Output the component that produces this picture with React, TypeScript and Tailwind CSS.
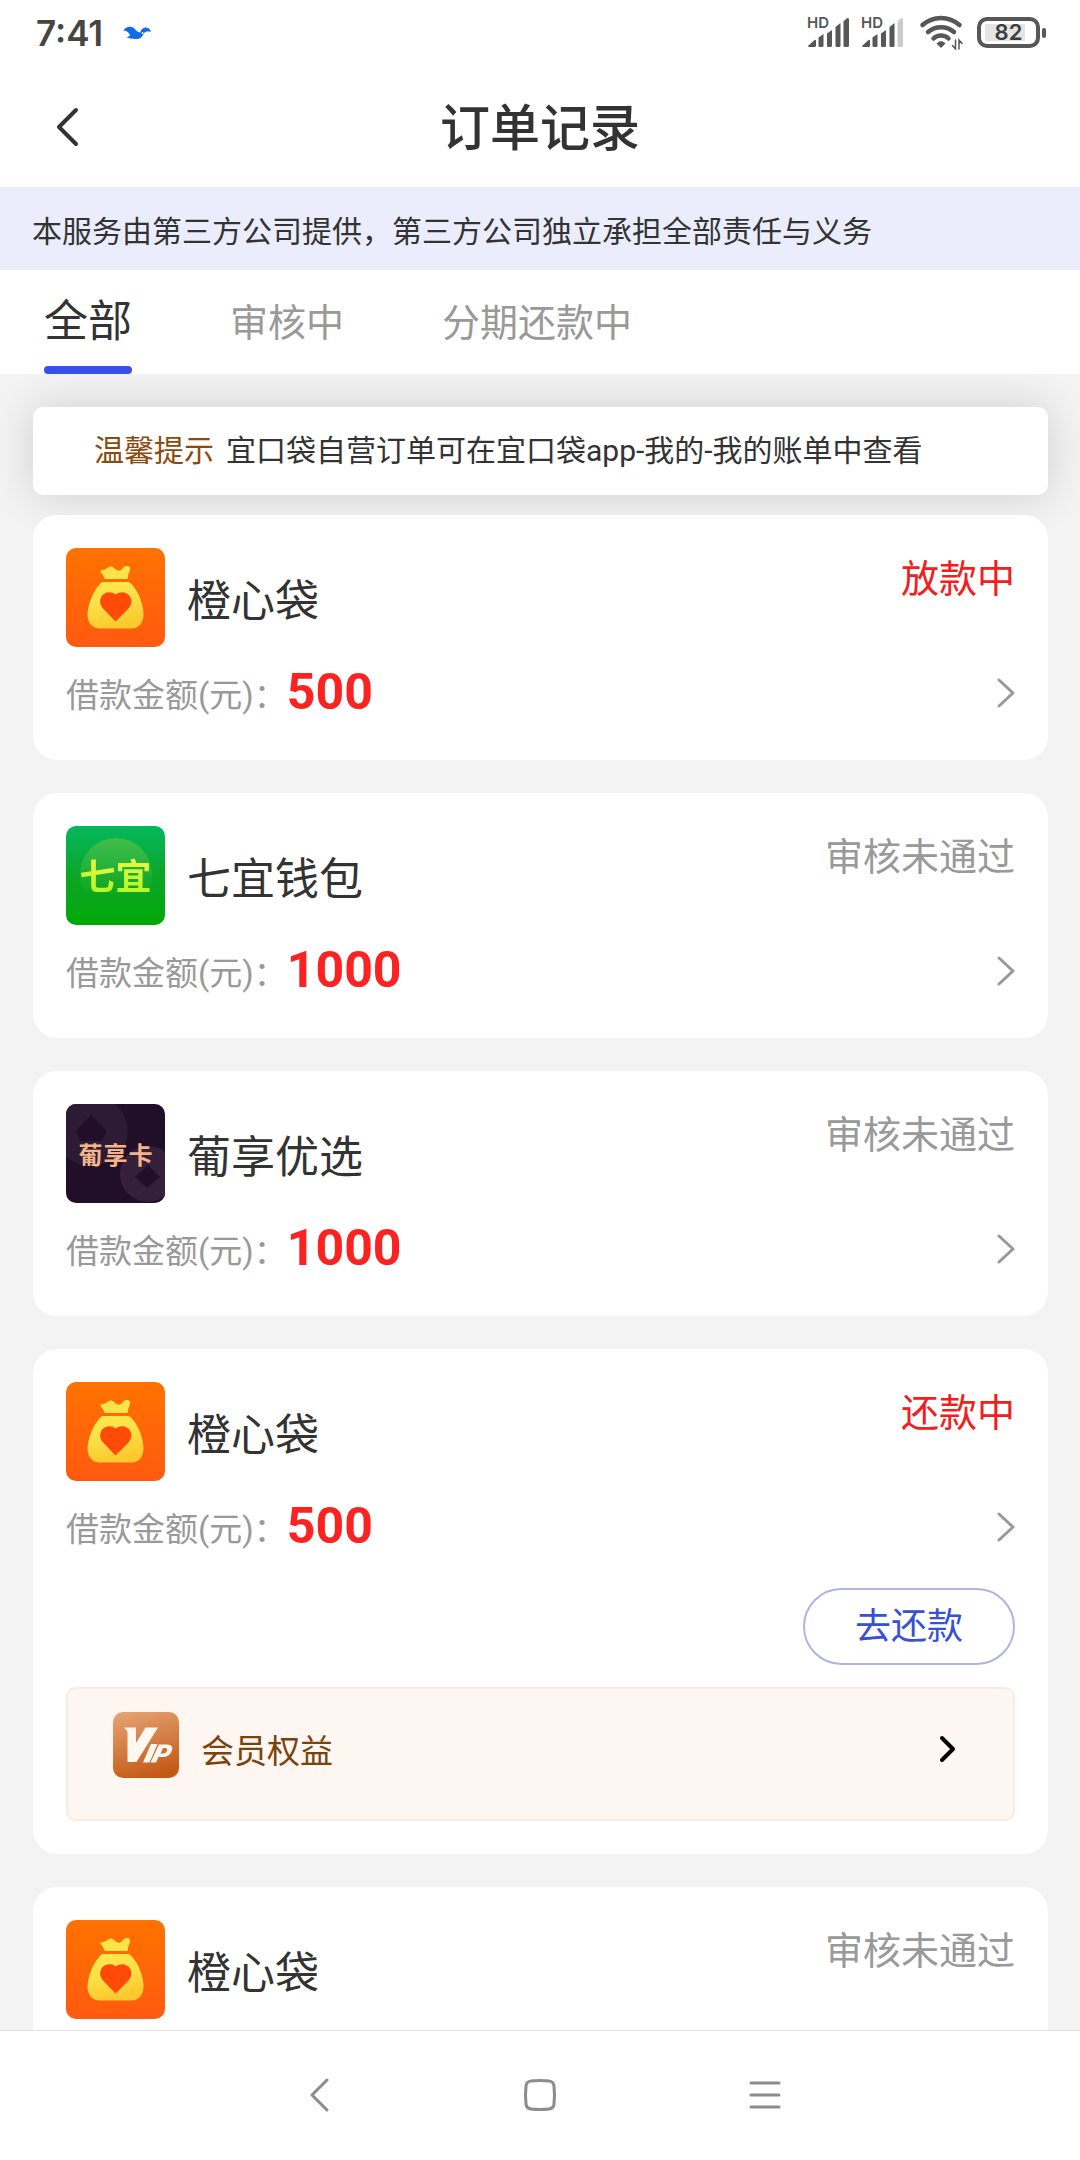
import React from "react";

type LogoKind = "bag" | "qiyi" | "puxiang";

type Order = {
  id: number;
  name: string;
  logo: LogoKind;
  status: string;
  active: boolean;
  amount: number;
  repay?: boolean;
};

const orders: Order[] = [
  { id: 1, name: "橙心袋", logo: "bag", status: "放款中", active: true, amount: 500 },
  { id: 2, name: "七宜钱包", logo: "qiyi", status: "审核未通过", active: false, amount: 1000 },
  { id: 3, name: "葡享优选", logo: "puxiang", status: "审核未通过", active: false, amount: 1000 },
  { id: 4, name: "橙心袋", logo: "bag", status: "还款中", active: true, amount: 500, repay: true },
  { id: 5, name: "橙心袋", logo: "bag", status: "审核未通过", active: false, amount: 500 },
];

const tabs = ["全部", "审核中", "分期还款中"];

function Signal({ weak }: { weak?: boolean }) {
  return (
    <div className="relative h-8 w-11">
      <svg viewBox="0 0 44 32" className="h-8 w-11" fill="#575757">
        <path d="M1.5 29.500 7 24.500Q9 23 9 25V29.5Q9 31 7.500 31H2Q.5 31 1.500 29.500Z" />
        <path d="M11.500 21.500 16.500 18V29.500Q16.500 31 15 31H13Q11.500 31 11.500 29.500V22.500Z" />
        <path d="M20 17.500 25 14V29.500Q25 31 23.500 31H21.500Q20 31 20 29.500V18.500Z" />
        <path d="M28.500 11 33.500 7V29.500Q33.500 31 32 31H30Q28.500 31 28.500 29.500V12Z" />
        <path
          d="M36.500 5.500 39.500 2.500Q42 1 42 4V29.500Q42 31 40.500 31H38Q36.500 31 36.500 29.500Z"
          fill={weak ? "#cbcbcb" : "#575757"}
        />
      </svg>
      <span className="absolute left-0 top-0 font-['Inter'] text-[15px] font-semibold leading-[14px] text-[#575757]">
        HD
      </span>
    </div>
  );
}

function StatusBar() {
  return (
    <div className="flex h-[66px] shrink-0 items-center justify-between pl-9 pr-[33px]">
      <div className="flex items-center gap-5">
        <span className="font-['Inter'] text-[35px] font-semibold leading-[44px] text-[#454545]">7:41</span>
        <svg viewBox="0 0 28 14" className="h-[14px] w-7" fill="#0f6be8">
          <path d="M0 4.500C3 .5 7-.2 10 1.500c3 2 4 5 7.500 5C17.500 4 20 1.500 23 1.500c3 .2 4.500 2.500 5 4.500-2-.6-4-.6-5.500 0-1 .5-1.500 1-2 2C19 12 16 13.500 12.500 13 9 12.800 6 12.500 3.500 11c1.500 0 3-.7 3.500-1.500C6.500 7 3.500 4 0 4.500Z" />
          <circle cx="19.500" cy="7" r=".9" fill="#fff" />
        </svg>
      </div>
      <div className="flex items-center gap-[14px] pb-0.5">
        <div className="flex gap-[10px]">
          <Signal />
          <Signal weak />
        </div>
        <svg viewBox="0 0 44 36" className="h-9 w-11" fill="none" stroke="#575757" strokeWidth="4.500" strokeLinecap="round">
          <path d="M3.500 11C14 1.500 30 1.500 40.500 11" />
          <path d="M9 18c7.500-6.500 18.500-6.500 26 0" />
          <path d="M14.500 24.500c4-4 11-4 15 0" />
          <path d="M19 29.500c2-1.500 4-1.500 6 0l-3 3Z" fill="#575757" strokeWidth="2" />
          <path d="M36.500 26v9l-3-3.500M40 35v-9l3 3.500" strokeWidth="1.500" />
        </svg>
        <div className="relative h-[31px] w-[70px]">
          <svg viewBox="0 0 70 31" className="h-[31px] w-[70px]">
            <rect x="8" y="7" width="40" height="17" fill="#e4e4e4" />
            <rect x="2" y="2" width="59" height="27" rx="8" fill="none" stroke="#575757" strokeWidth="4" />
            <rect x="65" y="11" width="4" height="10" rx="2" fill="#575757" />
          </svg>
          <span className="absolute inset-y-0 left-0 w-[63px] text-center font-['Inter'] text-[22px] font-semibold leading-[31px] text-[#3d3d3d]">
            82
          </span>
        </div>
      </div>
    </div>
  );
}

function Logo({ kind }: { kind: LogoKind }) {
  if (kind === "bag") {
    return (
      <svg viewBox="0 0 99 99" className="h-[99px] w-[99px] shrink-0 rounded-[10px]">
        <defs>
          <linearGradient id="bagBack" x1="0" y1="0" x2="0" y2="1">
            <stop offset="0" stopColor="#ff7200" />
            <stop offset="1" stopColor="#ff5a10" />
          </linearGradient>
          <linearGradient id="bagGold" x1="0" y1="0" x2="0.300" y2="1">
            <stop offset="0" stopColor="#fdea4c" />
            <stop offset="0.500" stopColor="#fcdf48" />
            <stop offset="1" stopColor="#fcca2e" />
          </linearGradient>
        </defs>
        <rect width="99" height="99" fill="url(#bagBack)" />
        <path
          d="M38.500 31c-.5-3-2-4.500-3.500-6.500-1-1.500-.5-2.500 1-2.500 3 0 4-1 6-2.500 2-1.500 4-1.500 6 .5 4 3.500 6 3.500 9 0 2-2 4-2.500 6-1.500 1.500 1 1.500 3 .5 5-1.500 3-1.500 5-2 7.500Z"
          fill="#fde34a"
        />
        <path
          d="M38 34h23c2 0 3 .5 4.500 2C73 44 77 56 77.500 65c.5 9-4 15.500-12 15.500H34c-8 0-12.500-6-12.500-14C22 56 27 43 34 36c1-1.500 2-2 4-2Z"
          fill="url(#bagGold)"
        />
        <path
          d="M49.500 46.500C45 42.500 38 44 35.500 48.500 33 53 34 57.500 38 61.500L49.500 73.500 61.500 61.500C65.500 57.500 66.500 53 64 48.500c-2.500-4.500-9.500-6-14.500-2Z"
          fill="#ff4a08"
        />
      </svg>
    );
  }
  if (kind === "qiyi") {
    return (
      <div className="relative flex h-[99px] w-[99px] shrink-0 items-center justify-center overflow-hidden rounded-[10px] bg-linear-to-b from-[#04b85c] via-[#0ca525] to-[#02a902]">
        <div className="absolute left-[14px] top-3 h-[72px] w-[72px] rounded-full bg-linear-to-b from-[#41bb45] to-transparent to-80%" />
        <span className="relative bg-linear-to-b from-[#f5f84a] to-[#a4f51c] bg-clip-text pt-1 text-[36px] font-bold leading-[44px] text-transparent">
          七宜
        </span>
      </div>
    );
  }
  return (
    <div className="relative flex h-[99px] w-[99px] shrink-0 items-center justify-center overflow-hidden rounded-[10px] bg-[#210f29]">
      <svg viewBox="0 0 99 99" className="absolute inset-0 h-full w-full">
        <path
          fillRule="evenodd"
          fill="#2d1a34"
          d="M25-8a37 35 0 0 1 0 70a37 35 0 0 1 0-70ZM25 11 10 27l4 10h22l5-10Z"
        />
        <path
          fillRule="evenodd"
          fill="#35203a"
          d="M82 42a28 28 0 0 1 0 56a28 28 0 0 1 0-56ZM82 61 69 73l12 11 13-11Z"
        />
      </svg>
      <span className="relative flex gap-px pt-1 text-[24px] font-bold leading-8 text-[#f3b489]">
        <span>葡</span>
        <span>享</span>
        <span>卡</span>
      </span>
    </div>
  );
}

function VipRow() {
  return (
    <a
      href="#vip"
      className="mt-[22px] flex h-[134px] items-start justify-between rounded-[10px] border-2 border-[#f8ebe3] bg-[#fef7f1] pl-[45px] pr-[57px] pt-[23px]"
    >
      <span className="flex items-start gap-[22px]">
        <svg viewBox="0 0 66 66" className="h-[66px] w-[66px] rounded-[10px]">
          <defs>
            <linearGradient id="vipBack" x1="0.200" y1="0" x2="0.500" y2="1">
              <stop offset="0" stopColor="#e5a272" />
              <stop offset="1" stopColor="#c45a16" />
            </linearGradient>
          </defs>
          <rect width="66" height="66" fill="url(#vipBack)" />
          <g fill="#fff8f0">
            <path d="M11 15.500H23V31L32.500 15.500H45L23.500 50H14.500V19.500Z" />
            <path d="M38 32h6.500L36.500 50.500H30Z" />
            <path
              fillRule="evenodd"
              d="M46 32.500h8c5 0 6.500 3 4.500 7s-5 5.500-9 5.500h-4L43 50.500h-5.500Zm4 3.500-2.500 5.500h2.500c2 0 3.500-1 4-3 .5-1.500 0-2.500-1.500-2.500Z"
            />
          </g>
        </svg>
        <span className="pt-4 text-[33px] leading-[48px] text-[#7a430d]">会员权益</span>
      </span>
      <svg
        viewBox="0 0 18 28"
        className="mt-[23px] h-7 w-[18px]"
        fill="none"
        stroke="#000"
        strokeWidth="4"
        strokeLinecap="round"
        strokeLinejoin="round"
      >
        <path d="M4 3 15 14 4 25" />
      </svg>
    </a>
  );
}

function OrderCard({ order }: { order: Order }) {
  return (
    <li className="rounded-[24px] bg-white p-[33px]">
      <div className="flex h-[99px] items-start justify-between">
        <div className="flex items-center gap-[22px]">
          <Logo kind={order.logo} />
          <h2 className="pt-2 text-[44px] leading-[64px] text-[#333]">{order.name}</h2>
        </div>
        <span
          className={
            order.active
              ? "pt-[3px] text-[38px] leading-[56px] text-[#f02020]"
              : "pt-[3px] text-[38px] leading-[56px] text-[#999]"
          }
        >
          {order.status}
        </span>
      </div>
      <a href="#order" className="mt-[11px] flex h-[69px] items-center justify-between">
        <span className="flex items-center">
          <span className="pt-1.5 text-[33px] leading-[48px] text-[#999]">借款金额(元)：</span>
          <span className="pb-0.5 text-[50px] font-bold leading-[60px] text-[#fb2222]">{order.amount}</span>
        </span>
        <svg
          viewBox="0 0 18 32"
          className="h-8 w-[18px]"
          fill="none"
          stroke="#999"
          strokeWidth="3"
          strokeLinecap="round"
          strokeLinejoin="round"
        >
          <path d="M2 3 16 16 2 29" />
        </svg>
      </a>
      {order.repay && (
        <>
          <div className="mt-[27px] flex justify-end">
            <button
              type="button"
              className="h-[77px] w-[212px] rounded-full border-2 border-[#adb5e0] text-[36px] leading-[54px] text-[#3850d2]"
            >
              去还款
            </button>
          </div>
          <VipRow />
        </>
      )}
    </li>
  );
}

export default function App() {
  return (
    <div className="flex h-screen flex-col overflow-hidden bg-[#f3f3f3] font-['Roboto','Noto_Sans_CJK_SC',sans-serif]">
      <div className="shrink-0 bg-white">
        <StatusBar />
        <header className="grid h-[121px] grid-cols-[1fr_auto_1fr] items-center px-[55px]">
          <button type="button" aria-label="返回" className="w-6">
            <svg
              viewBox="0 0 24 42"
              className="h-[42px] w-6"
              fill="none"
              stroke="#333"
              strokeWidth="4"
              strokeLinecap="round"
              strokeLinejoin="round"
            >
              <path d="M21 4 4 21 21 38" />
            </svg>
          </button>
          <h1 className="pt-1 text-[50px] font-medium leading-[72px] text-[#333]">订单记录</h1>
        </header>
      </div>

      <p className="shrink-0 bg-[#ebedfd] px-8 pb-4 pt-[22px] text-[30px] leading-[45px] text-[#333]">
        本服务由第三方公司提供，第三方公司独立承担全部责任与义务
      </p>

      <nav className="flex h-[104px] shrink-0 gap-[98px] bg-white px-11">
        {tabs.map((tab, i) => (
          <button
            key={tab}
            type="button"
            className={
              i === 0
                ? "flex flex-col items-center justify-between pt-5 text-[44px] leading-[64px] text-[#333]"
                : "flex flex-col pt-[25px] text-[38px] leading-[56px] text-[#999]"
            }
          >
            {tab}
            {i === 0 && <span className="h-2 w-full rounded-[4px] bg-[#3850e6]" />}
          </button>
        ))}
      </nav>

      <main className="flex min-h-0 flex-1 flex-col overflow-y-auto pl-[33px] pr-8 pt-[33px] [scrollbar-width:none]">
        <p className="flex h-[88px] shrink-0 items-center gap-3 rounded-[10px] bg-white px-[61px] pb-0.5 text-[30px] leading-[45px] text-[#333] shadow-[0_0_44px_rgba(0,0,0,0.15)]">
          <span className="text-[#8a4a10]">温馨提示</span>
          <span>宜口袋自营订单可在宜口袋app-我的-我的账单中查看</span>
        </p>
        <ul className="relative mt-5 flex flex-col gap-[33px]">
          {orders.map((order) => (
            <OrderCard key={order.id} order={order} />
          ))}
        </ul>
      </main>

      <footer className="flex h-[130px] shrink-0 items-center justify-center gap-[187px] border-t border-[#e2e2e2] bg-white pb-0.5">
        <button type="button" aria-label="后退">
          <svg
            viewBox="0 0 36 36"
            className="h-9 w-9"
            fill="none"
            stroke="#8c8c8c"
            strokeWidth="3"
            strokeLinecap="round"
            strokeLinejoin="round"
          >
            <path d="M28 3 13 18 28 33" />
          </svg>
        </button>
        <button type="button" aria-label="主屏幕">
          <svg viewBox="0 0 36 36" className="h-9 w-9" fill="none" stroke="#8c8c8c" strokeWidth="3">
            <path d="M9 4Q18 3 27 4Q31.500 4.500 32 9Q33 18 32 27Q31.500 31.500 27 32Q18 33 9 32Q4.500 31.500 4 27Q3 18 4 9Q4.500 4.500 9 4Z" />
          </svg>
        </button>
        <button type="button" aria-label="菜单">
          <svg viewBox="0 0 36 36" className="h-9 w-9" fill="none" stroke="#8c8c8c" strokeWidth="3" strokeLinecap="round">
            <path d="M6 6H34M6 18H34M6 30H34" />
          </svg>
        </button>
      </footer>
    </div>
  );
}
